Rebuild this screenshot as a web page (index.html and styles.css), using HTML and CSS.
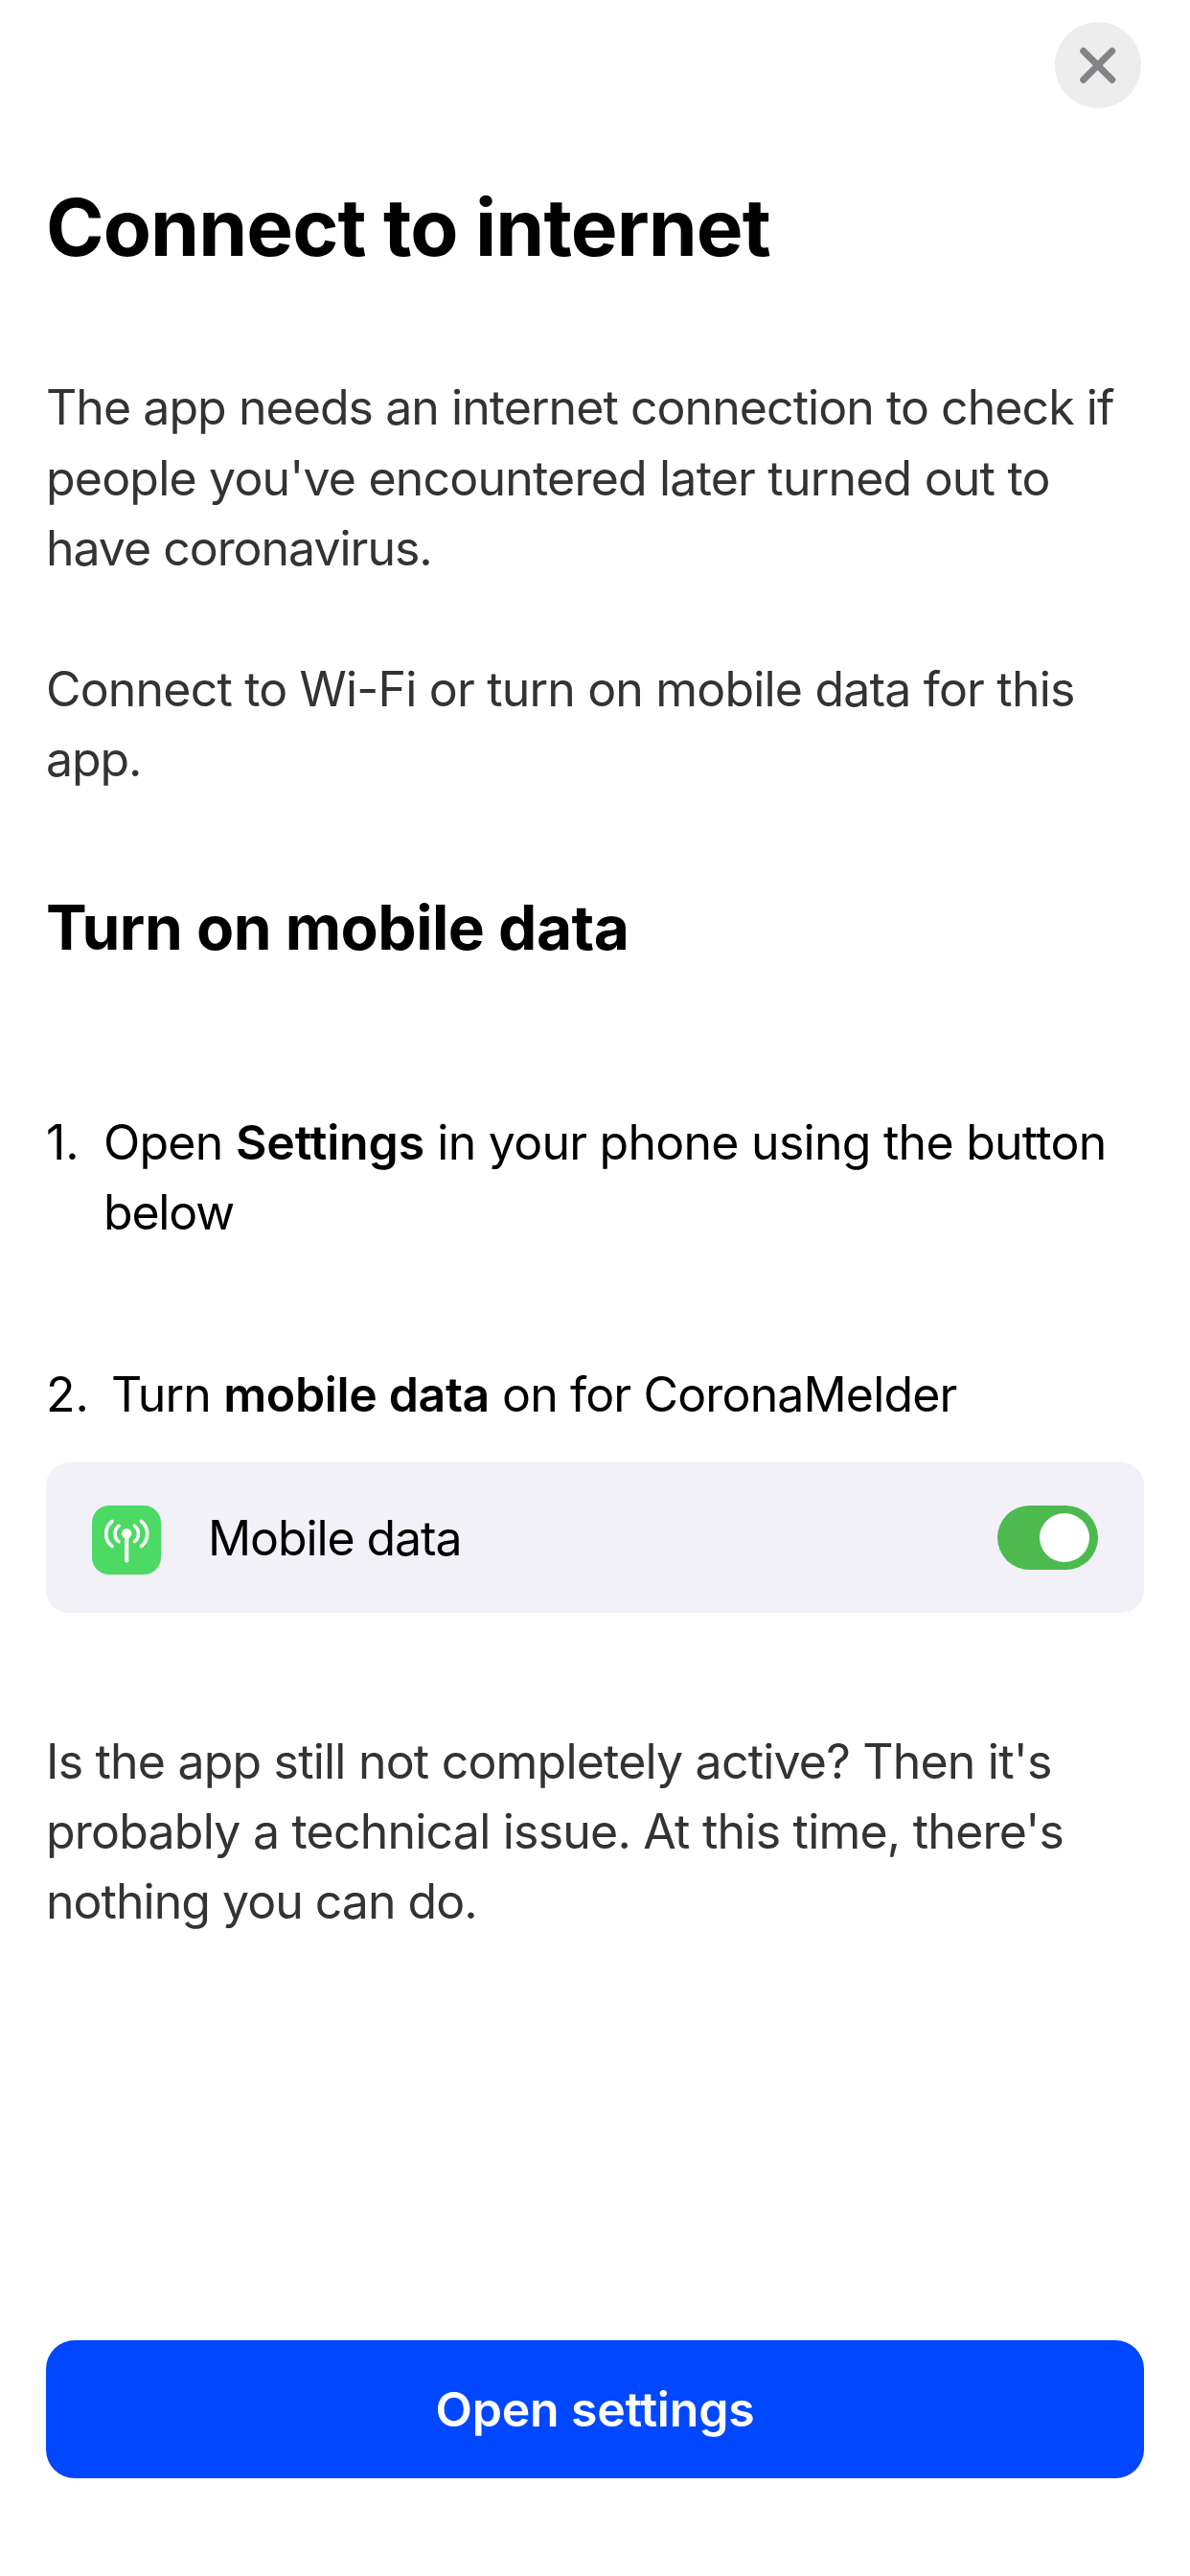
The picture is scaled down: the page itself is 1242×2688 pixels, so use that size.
FILE: index.html
```html
<!DOCTYPE html>
<html lang="en">
<head>
<meta charset="utf-8">
<title>Connect to internet</title>
<link rel="stylesheet" href="styles.css">
</head>
<body>
<main class="screen">
  <header class="bar">
    <button class="close" aria-label="Close"><svg viewBox="0 0 90 90"><path d="M29.7 30.3L59.7 60.3M59.7 30.3L29.7 60.3"/></svg></button>
  </header>
  <h1>Connect to internet</h1>
  <div class="intro">
    <p class="l1">The app needs an internet connection to check if</p>
    <p class="l2">people you've encountered later turned out to</p>
    <p class="l3">have coronavirus.</p>
  </div>
  <div class="advice">
    <p class="l4">Connect to Wi-Fi or turn on mobile data for this</p>
    <p class="l5">app.</p>
  </div>
  <h2>Turn on mobile data</h2>
  <div class="step first">
    <span class="num">1.</span>
    <div><p class="l6">Open <b>Settings</b> in your phone using the button</p><p class="l7">below</p></div>
  </div>
  <div class="step second">
    <span class="num">2.</span>
    <p class="l8">Turn <b>mobile data</b> on for CoronaMelder</p>
  </div>
  <div class="card">
    <svg class="icon" viewBox="0 0 72 72"><rect width="72" height="72" rx="18" fill="#4cd964"/><circle cx="36.2" cy="29.2" r="5.2" fill="#fff"/><g fill="none" stroke="#fff" stroke-width="3.6" stroke-linecap="round"><path d="M36.2 30V57.5" stroke-width="4.2"/><path d="M28 21.2a10.4 10.4 0 0 0 0 16.4M44.4 21.2a10.4 10.4 0 0 1 0 16.4M21 16.5a16.5 16.5 0 0 0 0 26M51.4 16.5a16.5 16.5 0 0 1 0 26"/></g></svg>
    <span class="label">Mobile data</span>
    <span class="toggle"><span class="knob"></span></span>
  </div>
  <div class="outro">
    <p class="l10">Is the app still not completely active? Then it's</p>
    <p class="l11">probably a technical issue. At this time, there's</p>
    <p class="l12">nothing you can do.</p>
  </div>
  <button class="cta">Open settings</button>
</main>
</body>
</html>
```
FILE: styles.css
```css
* { box-sizing: border-box; margin: 0; padding: 0; }
body { background: #fff; color: #000; font-family: Inter, sans-serif; font-size: 50px; line-height: 73px; }
.screen { height: 2688px; padding: 23px 48px 102px; display: flex; flex-direction: column; }
.bar { display: flex; justify-content: flex-end; height: 90px; padding-right: 3px; }
button { border: 0; font: inherit; }
.close { width: 90px; height: 90px; border-radius: 50%; background: #ededed; }
.close svg { display: block; width: 90px; height: 90px; fill: none; stroke: #848488; stroke-width: 7; stroke-linecap: round; }
h1, h2, p, .label { white-space: nowrap; }
h1 { margin-top: 75px; font-size: 82px; line-height: 99px; letter-spacing: -0.95px; }
h2 { margin-top: 98.5px; font-size: 64px; line-height: 81px; letter-spacing: -0.5px; }
.intro { margin-top: 102px; line-height: 73.5px; color: #333; }
.advice { margin-top: 73px; color: #333; }
.step { display: flex; }
b { font-weight: 600; }
.first { margin-top: 147.5px; }
.first .num { width: 60px; }
.second { margin-top: 117px; }
.second .num { width: 68px; }
.l1 { letter-spacing: -0.94px; }
.l2 { letter-spacing: -0.8px; }
.l3 { letter-spacing: -1.02px; }
.l4 { letter-spacing: -0.82px; }
.l5 { letter-spacing: -1.1px; }
.l6 { letter-spacing: -0.74px; }
.l6 b { letter-spacing: -0.15px; }
.l7 { letter-spacing: -1.2px; }
.l8 { letter-spacing: -0.85px; }
.l8 b { letter-spacing: -0.35px; }
.l10 { letter-spacing: -0.8px; }
.l11 { letter-spacing: -0.78px; }
.l12 { letter-spacing: -0.98px; }
.card { flex: none; margin-top: 34.5px; height: 157px; border-radius: 24px; background: #f2f1f7; display: flex; align-items: flex-start; padding: 45px 48px 0; }
.icon { width: 72px; height: 72px; margin-right: 49px; }
.label { margin-top: -2px; letter-spacing: -1.1px; }
.toggle { margin-left: auto; width: 105px; height: 67px; border-radius: 34px; background: #4cba4f; padding: 8px 9px; display: flex; justify-content: flex-end; }
.knob { width: 52px; height: 51px; border-radius: 50%; background: #fff; }
.outro { margin-top: 118.5px; color: #333; }
.cta { flex: none; margin-top: auto; height: 144px; border-radius: 30px; background: #0047ff; color: #fff; font-weight: 600; letter-spacing: -0.2px; }
```
